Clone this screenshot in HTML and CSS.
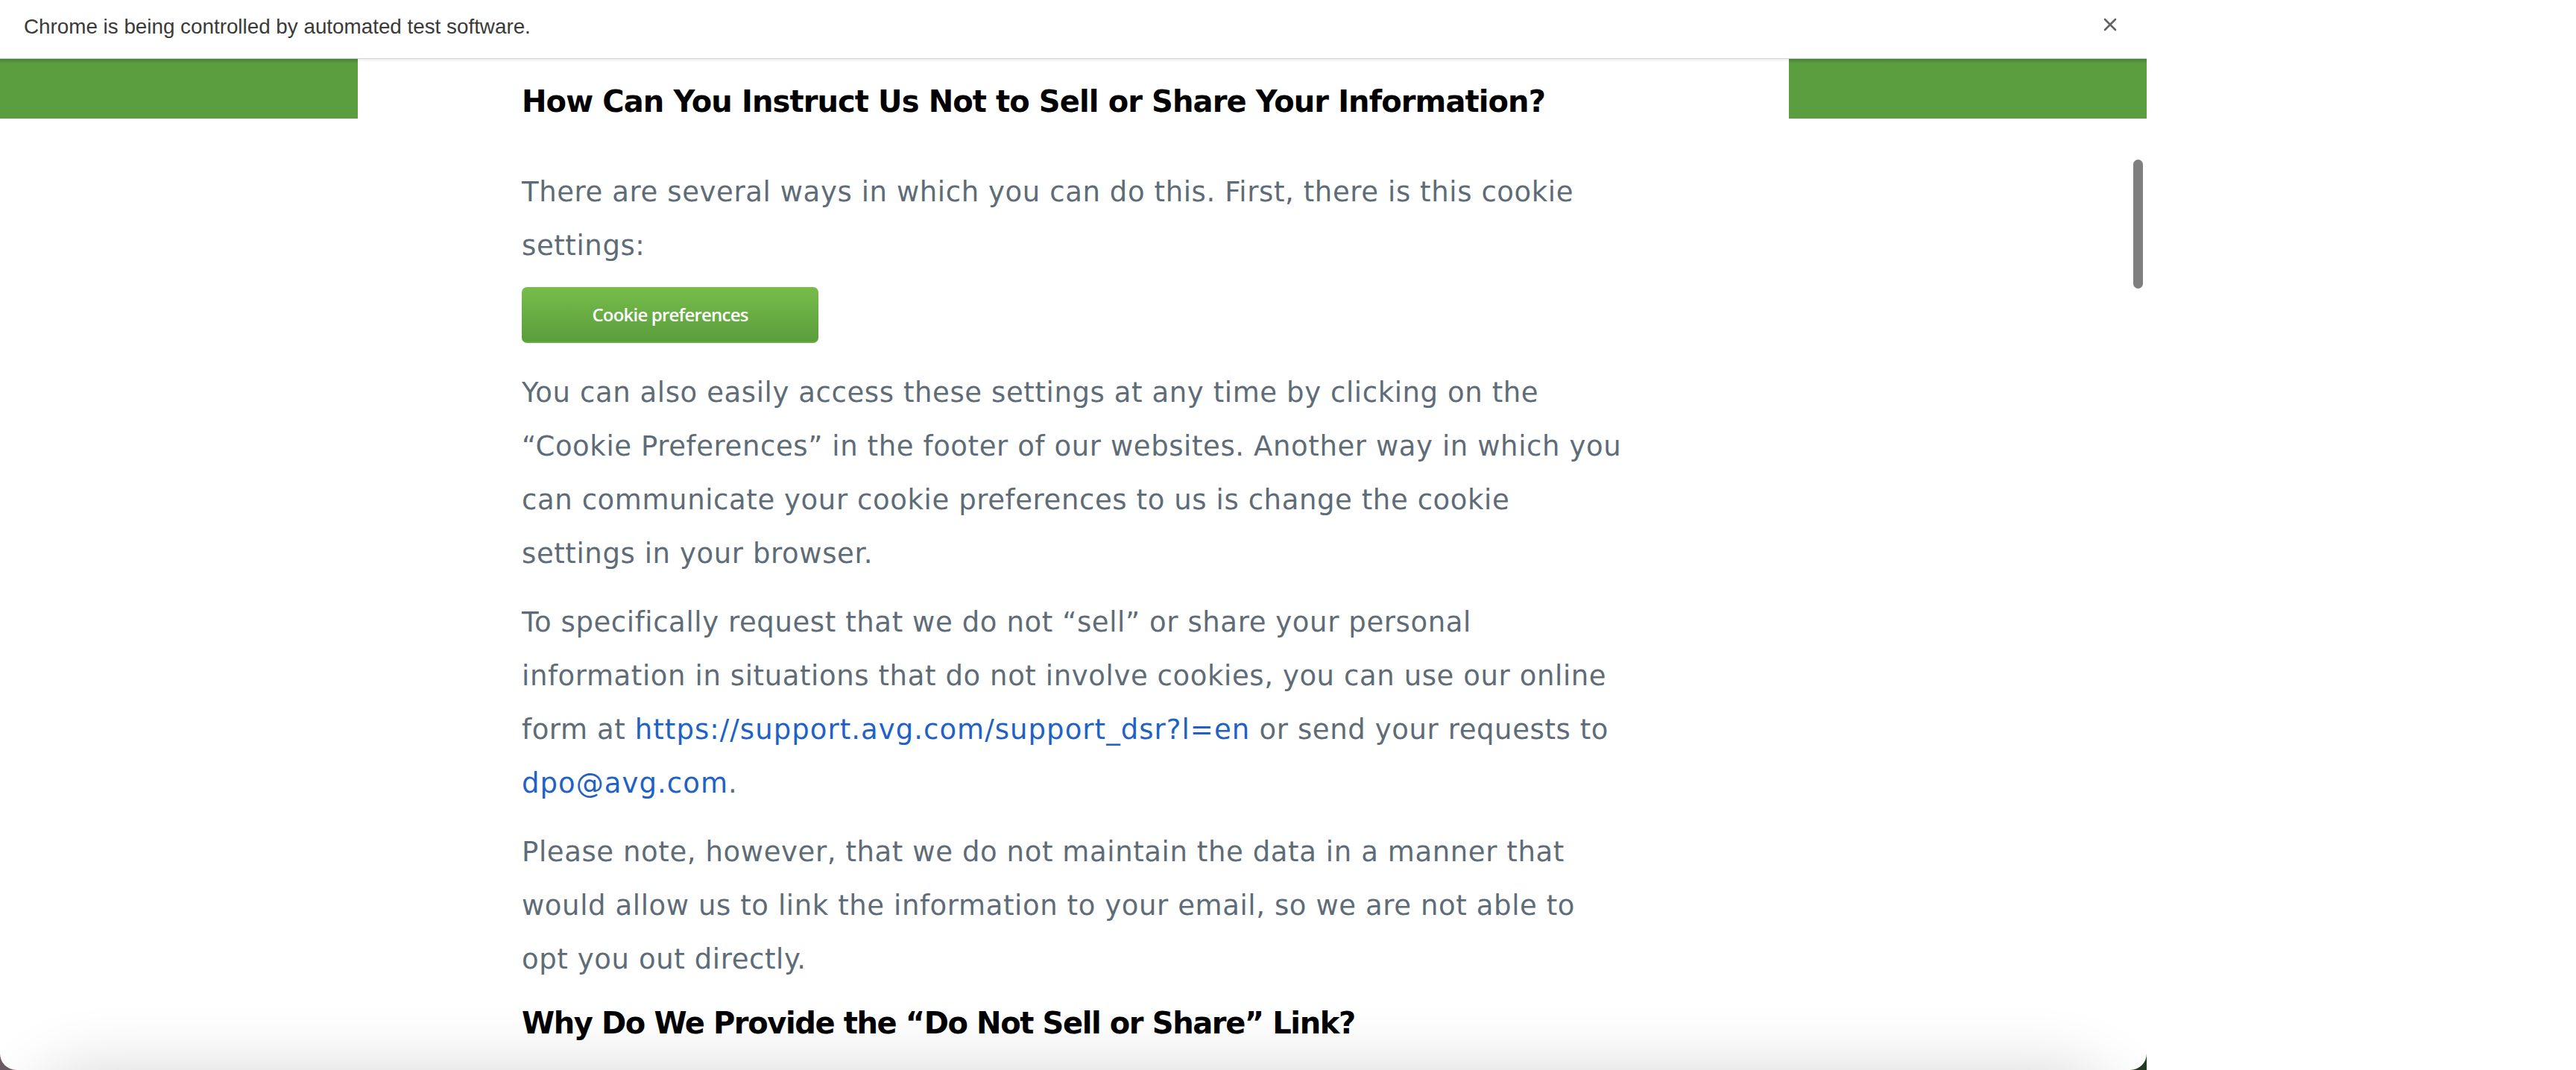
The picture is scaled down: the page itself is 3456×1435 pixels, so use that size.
FILE: index.html
```html
<!DOCTYPE html>
<html lang="en">
<head>
<meta charset="utf-8">
<title>Do Not Sell or Share</title>
<link rel="stylesheet" href="styles.css">
</head>
<body>
<div class="stage">
  <div class="window">
    <div class="infobar">
      <span class="infobar-text">Chrome is being controlled by automated test software.</span>
      <svg class="infobar-close" width="18" height="18" viewBox="0 0 18 18"><path d="M2 2 L16 16 M16 2 L2 16" stroke="#5f6368" stroke-width="2.6" stroke-linecap="round"/></svg>
    </div>
    <div class="page">
      <div class="band">
        <div class="band-side"></div>
        <div class="band-mid"></div>
        <div class="band-side"></div>
      </div>
      <main class="content">
        <h2 class="heading">How Can You Instruct Us Not to Sell or Share Your Information?</h2>
        <p class="text first">There are several ways in which you can do this. First, there is this cookie settings:</p>
        <button class="cookie-btn">Cookie preferences</button>
        <p class="text">You can also easily access these settings at any time by clicking on the “Cookie Preferences” in the footer of our websites. Another way in which you can communicate your cookie preferences to us is change the cookie settings in your browser.</p>
        <p class="text">To specifically request that we do not “sell” or share your personal information in situations that do not involve cookies, you can use our online form at <a class="link" href="#">https://support.avg.com/support_dsr?l=en</a> or send your requests to <a class="link" href="#">dpo@avg.com</a>.</p>
        <p class="text">Please note, however, that we do not maintain the data in a manner that would allow us to link the information to your email, so we are not able to opt you out directly.</p>
        <h2 class="heading second">Why Do We Provide the “Do Not Sell or Share” Link?</h2>
      </main>
      <div class="scrollbar"></div>
      <div class="bottom-shadow"></div>
    </div>
  </div>
</div>
</body>
</html>
```
FILE: styles.css
```css
html, body {
  margin: 0;
  padding: 0;
  background: #ffffff;
}
.stage {
  width: 3456px;
  height: 1435px;
  position: relative;
  overflow: hidden;
  background: linear-gradient(to right, #6b5a63 0 50%, #213b22 50% 2880px, #ffffff 2880px);
}
.window {
  width: 2880px;
  height: 1435px;
  background: #ffffff;
  border-radius: 0 0 22px 22px;
  overflow: hidden;
  display: flex;
  flex-direction: column;
  position: relative;
}
.infobar {
  height: 78px;
  flex: none;
  display: flex;
  align-items: center;
  justify-content: space-between;
  padding: 0 40px 0 32px;
  border-bottom: 1px solid #d4d4d4;
  box-shadow: 0 2px 4px rgba(0,0,0,0.08);
  position: relative;
  z-index: 2;
  background: #fff;
}
.infobar-text {
  font-family: "Liberation Sans", Arial, sans-serif;
  font-size: 27.8px;
  color: #3a3a3a;
  margin-top: -6px;
}
.infobar-close {
  margin-top: -12px;
}
.page {
  flex: 1;
  position: relative;
  overflow: hidden;
}
.band {
  position: absolute;
  top: 0;
  left: 0;
  right: 0;
  height: 80px;
  display: grid;
  grid-template-columns: 480px 1920px 480px;
}
.band-side {
  background: linear-gradient(#4f8a3a 0, #5a9e3f 6px, #5a9e3f 100%);
}
.band-mid {
  background: #ffffff;
}
.content {
  position: relative;
  width: 1480px;
  margin: 0 auto;
  padding-top: 33px;
  display: flex;
  flex-direction: column;
  align-items: flex-start;
}
.heading {
  font-family: "DejaVu Sans", Verdana, sans-serif;
  font-weight: bold;
  font-size: 40px;
  line-height: 48px;
  color: #000;
  margin: 0 0 62px;
  letter-spacing: -0.9px;
}
.heading.second {
  margin: 5px 0 0;
  letter-spacing: -1.4px;
}
.text {
  font-family: "DejaVu Sans", Verdana, sans-serif;
  font-size: 37px;
  line-height: 72px;
  color: #5e6c78;
  margin: 0 0 20px;
  letter-spacing: 0.6px;
}
.text.first {
  margin-bottom: 19px;
}
.link {
  color: #1f62c4;
  text-decoration: none;
  letter-spacing: 1.05px;
}
.cookie-btn {
  width: 398px;
  height: 75px;
  border: none;
  border-bottom: 2px solid #6aab45;
  border-radius: 7px;
  background: linear-gradient(#77bd4a, #5a9d3d);
  color: #ffffff;
  font-family: "Open Sans", sans-serif;
  font-weight: 600;
  font-size: 24px;
  letter-spacing: -0.8px;
  margin: 0 0 31px;
  padding: 0;
  cursor: pointer;
}
.scrollbar {
  position: absolute;
  left: 2862px;
  top: 135px;
  width: 13px;
  height: 173px;
  border-radius: 7px;
  background: #7f7f7f;
}
.bottom-shadow {
  position: absolute;
  left: 70px;
  right: 70px;
  bottom: -130px;
  height: 100px;
  border-radius: 60px;
  box-shadow: 0 0 90px 30px rgba(0,0,0,0.16);
}
```
